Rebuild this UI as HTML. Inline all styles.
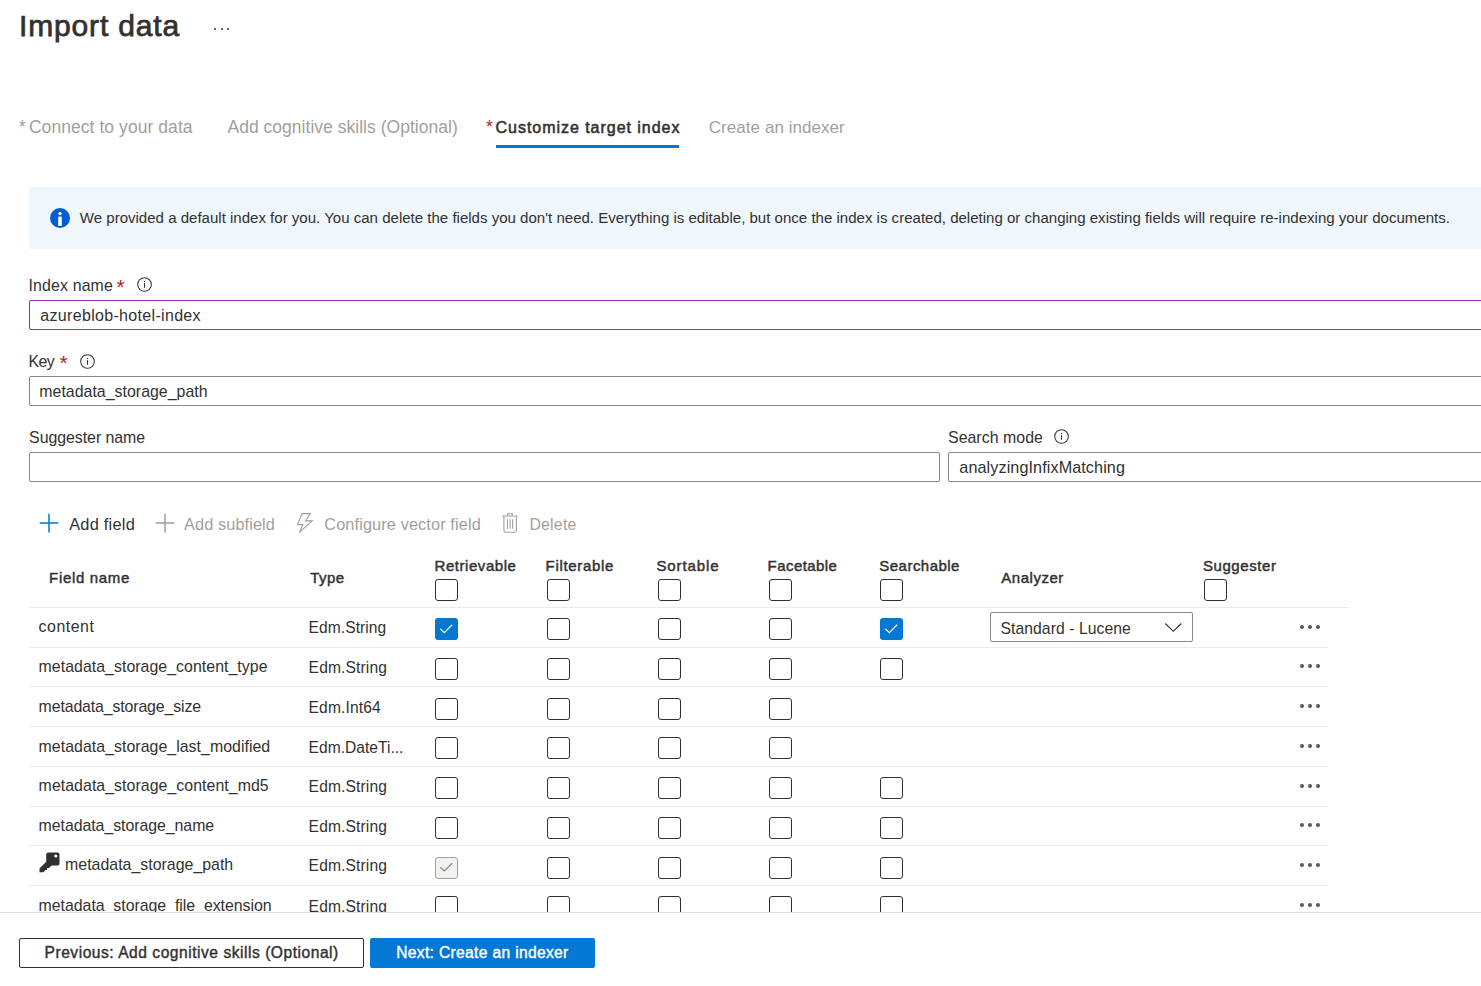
<!DOCTYPE html>
<html><head><meta charset="utf-8"><title>Import data</title>
<style>
html,body{margin:0;padding:0;background:#fff;}
body{width:1481px;height:986px;overflow:hidden;position:relative;font-family:"Liberation Sans",sans-serif;}
.t{position:absolute;white-space:nowrap;}
.b{position:absolute;}
</style></head><body>
<div class="t" style="left:19.02px;top:5.45px;font-size:30.0px;line-height:42px;color:#323130;-webkit-text-stroke:0.75px #323130;letter-spacing:0.848px;">Import data</div>
<div class="b" style="left:214.00px;top:27.50px;width:2.00px;height:2.00px;background:#323130;border-radius:50%"></div>
<div class="b" style="left:220.50px;top:27.50px;width:2.00px;height:2.00px;background:#323130;border-radius:50%"></div>
<div class="b" style="left:227.00px;top:27.50px;width:2.00px;height:2.00px;background:#323130;border-radius:50%"></div>
<div class="t" style="left:19.08px;top:114.94px;font-size:17.5px;line-height:24px;color:#a19f9d;">*</div>
<div class="t" style="left:28.90px;top:114.70px;font-size:17.5px;line-height:24px;color:#a19f9d;letter-spacing:0.063px;">Connect to your data</div>
<div class="t" style="left:227.46px;top:114.70px;font-size:17.5px;line-height:24px;color:#a19f9d;letter-spacing:0.024px;">Add cognitive skills (Optional)</div>
<div class="t" style="left:485.98px;top:114.94px;font-size:17.5px;line-height:24px;color:#a4262c;">*</div>
<div class="t" style="left:495.56px;top:116.78px;font-size:16.0px;line-height:22px;color:#323130;-webkit-text-stroke:0.55px #323130;letter-spacing:0.964px;">Customize target index</div>
<div class="b" style="left:496.00px;top:145.20px;width:183.00px;height:2.80px;background:#0078d4"></div>
<div class="t" style="left:708.78px;top:115.67px;font-size:17.0px;line-height:24px;color:#a19f9d;letter-spacing:0.055px;">Create an indexer</div>
<div class="b" style="left:29.00px;top:187.00px;width:1471.00px;height:61.80px;background:#eff6fc;border-radius:2px"></div>
<svg class="b" style="left:50px;top:208px" width="20" height="20" viewBox="0 0 20 20"><circle cx="10" cy="10" r="10" fill="#015cda"/><circle cx="10" cy="5.6" r="1.7" fill="#fff"/><rect x="8.2" y="8.6" width="3.6" height="9.4" fill="#fff"/></svg>
<div class="t" style="left:79.80px;top:206.97px;font-size:15.05px;line-height:21px;color:#323130;letter-spacing:-0.004px;">We provided a default index for you. You can delete the fields you don't need. Everything is editable, but once the index is created, deleting or changing existing fields will require re-indexing your documents.</div>
<div class="t" style="left:28.52px;top:275.37px;font-size:15.9px;line-height:22px;color:#323130;letter-spacing:0.142px;">Index name</div>
<div class="t" style="left:116.50px;top:272.22px;font-size:21px;line-height:29px;color:#a4262c;">*</div>
<svg class="b" style="left:137.00px;top:277.00px" width="15" height="15" viewBox="0 0 15 15"><circle cx="7.5" cy="7.5" r="6.8" fill="none" stroke="#323130" stroke-width="1.05"/><rect x="7" y="6.2" width="1" height="4.6" fill="#323130"/><circle cx="7.5" cy="4.5" r="0.65" fill="#323130"/></svg>
<div class="b" style="left:29.00px;top:300.00px;width:1491.00px;height:30.00px;border:1.1px solid #8a30a8;border-radius:2px;box-sizing:border-box;background:#fff"></div>
<div class="t" style="left:40.30px;top:305.12px;font-size:16.0px;line-height:22px;color:#323130;letter-spacing:0.320px;">azureblob-hotel-index</div>
<div class="t" style="left:28.44px;top:350.93px;font-size:15.9px;line-height:22px;color:#323130;letter-spacing:-0.560px;">Key</div>
<div class="t" style="left:59.50px;top:348.22px;font-size:21px;line-height:29px;color:#a4262c;">*</div>
<svg class="b" style="left:80.10px;top:353.50px" width="15" height="15" viewBox="0 0 15 15"><circle cx="7.5" cy="7.5" r="6.8" fill="none" stroke="#323130" stroke-width="1.05"/><rect x="7" y="6.2" width="1" height="4.6" fill="#323130"/><circle cx="7.5" cy="4.5" r="0.65" fill="#323130"/></svg>
<div class="b" style="left:29.00px;top:376.00px;width:1491.00px;height:30.20px;border:1.1px solid #8a8886;border-radius:2px;box-sizing:border-box;background:#fff"></div>
<div class="t" style="left:39.30px;top:381.05px;font-size:15.9px;line-height:22px;color:#323130;letter-spacing:0.020px;">metadata_storage_path</div>
<div class="t" style="left:29.08px;top:427.17px;font-size:15.9px;line-height:22px;color:#323130;letter-spacing:-0.043px;">Suggester name</div>
<div class="b" style="left:29.00px;top:452.40px;width:910.60px;height:29.70px;border:1.1px solid #8a8886;border-radius:2px;box-sizing:border-box;background:#fff"></div>
<div class="t" style="left:948.00px;top:427.17px;font-size:15.9px;line-height:22px;color:#323130;letter-spacing:0.032px;">Search mode</div>
<svg class="b" style="left:1054.00px;top:429.30px" width="15" height="15" viewBox="0 0 15 15"><circle cx="7.5" cy="7.5" r="6.8" fill="none" stroke="#323130" stroke-width="1.05"/><rect x="7" y="6.2" width="1" height="4.6" fill="#323130"/><circle cx="7.5" cy="4.5" r="0.65" fill="#323130"/></svg>
<div class="b" style="left:948.20px;top:452.40px;width:571.80px;height:29.70px;border:1.1px solid #8a8886;border-radius:2px;box-sizing:border-box;background:#fff"></div>
<div class="t" style="left:959.32px;top:455.55px;font-size:16.2px;line-height:23px;color:#323130;letter-spacing:0.088px;">analyzingInfixMatching</div>
<svg class="b" style="left:39px;top:513px" width="20" height="20" viewBox="0 0 20 20"><path d="M10 0.7 V19.5 M0.7 10 H19.3" stroke="#0078d4" stroke-width="1.5" fill="none"/></svg>
<div class="t" style="left:69.20px;top:512.58px;font-size:16.4px;line-height:23px;color:#323130;letter-spacing:0.230px;">Add field</div>
<svg class="b" style="left:154.5px;top:513px" width="20" height="20" viewBox="0 0 20 20"><path d="M10 0.7 V19.5 M0.7 10 H19.3" stroke="#a19f9d" stroke-width="1.5" fill="none"/></svg>
<div class="t" style="left:184.10px;top:512.61px;font-size:16.3px;line-height:23px;color:#a19f9d;letter-spacing:0.109px;">Add subfield</div>
<svg class="b" style="left:0;top:0" width="1481" height="986" viewBox="0 0 1481 986"><path d="M302.1,513.6 L310.2,513.6 L305.4,520.9 L312.2,520.9 L299.4,532.4 L302.9,524.6 L297.5,524.6 Z" fill="none" stroke="#a19f9d" stroke-width="1.1" stroke-linejoin="miter"/><path d="M502.1,516 H517.7 M507.6,516 V513.8 H512.3 V516 M503.9,516.2 V530.5 Q503.9,532.3 505.7,532.3 H514.5 Q516.3,532.3 516.3,530.5 V516.2 M507.4,519.2 V528.8 M510.1,519.2 V528.8 M512.6,519.2 V528.8" fill="none" stroke="#a19f9d" stroke-width="1.1"/></svg>
<div class="t" style="left:324.30px;top:512.61px;font-size:16.3px;line-height:23px;color:#a19f9d;letter-spacing:0.122px;">Configure vector field</div>
<div class="t" style="left:529.40px;top:514.09px;font-size:15.8px;line-height:22px;color:#a19f9d;letter-spacing:0.256px;">Delete</div>
<div class="t" style="left:49.08px;top:566.62px;font-size:15.0px;line-height:21px;color:#323130;-webkit-text-stroke:0.45px #323130;letter-spacing:0.676px;">Field name</div>
<div class="t" style="left:310.22px;top:566.62px;font-size:15.0px;line-height:21px;color:#323130;-webkit-text-stroke:0.45px #323130;letter-spacing:0.453px;">Type</div>
<div class="t" style="left:434.50px;top:554.78px;font-size:15.0px;line-height:21px;color:#323130;-webkit-text-stroke:0.45px #323130;letter-spacing:0.552px;">Retrievable</div>
<div class="b" style="left:435.00px;top:579.00px;width:22.60px;height:22.00px;border:1.5px solid #323130;border-radius:3px;box-sizing:border-box;background:#fff"></div>
<div class="t" style="left:545.62px;top:554.78px;font-size:15.0px;line-height:21px;color:#323130;-webkit-text-stroke:0.45px #323130;letter-spacing:0.667px;">Filterable</div>
<div class="b" style="left:547.00px;top:579.00px;width:22.60px;height:22.00px;border:1.5px solid #323130;border-radius:3px;box-sizing:border-box;background:#fff"></div>
<div class="t" style="left:656.46px;top:554.78px;font-size:15.0px;line-height:21px;color:#323130;-webkit-text-stroke:0.45px #323130;letter-spacing:0.903px;">Sortable</div>
<div class="b" style="left:658.00px;top:579.00px;width:22.60px;height:22.00px;border:1.5px solid #323130;border-radius:3px;box-sizing:border-box;background:#fff"></div>
<div class="t" style="left:767.62px;top:554.78px;font-size:15.0px;line-height:21px;color:#323130;-webkit-text-stroke:0.45px #323130;letter-spacing:0.430px;">Facetable</div>
<div class="b" style="left:769.00px;top:579.00px;width:22.60px;height:22.00px;border:1.5px solid #323130;border-radius:3px;box-sizing:border-box;background:#fff"></div>
<div class="t" style="left:879.34px;top:554.78px;font-size:15.0px;line-height:21px;color:#323130;-webkit-text-stroke:0.45px #323130;letter-spacing:0.471px;">Searchable</div>
<div class="b" style="left:880.00px;top:579.00px;width:22.60px;height:22.00px;border:1.5px solid #323130;border-radius:3px;box-sizing:border-box;background:#fff"></div>
<div class="t" style="left:1001.30px;top:566.62px;font-size:15.0px;line-height:21px;color:#323130;-webkit-text-stroke:0.45px #323130;letter-spacing:0.526px;">Analyzer</div>
<div class="t" style="left:1202.96px;top:554.78px;font-size:15.0px;line-height:21px;color:#323130;-webkit-text-stroke:0.45px #323130;letter-spacing:0.570px;">Suggester</div>
<div class="b" style="left:1204.00px;top:579.00px;width:22.60px;height:22.00px;border:1.5px solid #323130;border-radius:3px;box-sizing:border-box;background:#fff"></div>
<div class="b" style="left:29.00px;top:607.00px;width:1320.00px;height:1.00px;background:#edebe9"></div>
<div class="b" style="left:0;top:608px;width:1481px;height:304px;overflow:hidden">
<div class="t" style="left:38.60px;top:7.85px;font-size:15.9px;line-height:22px;color:#323130;letter-spacing:0.520px;">content</div>
<div class="t" style="left:308.52px;top:8.89px;font-size:15.6px;line-height:22px;color:#323130;letter-spacing:0.071px;">Edm.String</div>
<div class="b" style="left:435px;top:10.1px;width:22.6px;height:22px;background:#0078d4;border-radius:3px"><svg width="22.6" height="22" viewBox="0 0 22.6 22" style="position:absolute;left:0;top:0"><path d="M5.3 10.8 L9.3 14.6 L17.2 6.8" fill="none" stroke="#fff" stroke-width="1.2"/></svg></div>
<div class="b" style="left:547.00px;top:10.10px;width:22.60px;height:22.00px;border:1.5px solid #323130;border-radius:3px;box-sizing:border-box;background:#fff"></div>
<div class="b" style="left:658.00px;top:10.10px;width:22.60px;height:22.00px;border:1.5px solid #323130;border-radius:3px;box-sizing:border-box;background:#fff"></div>
<div class="b" style="left:769.00px;top:10.10px;width:22.60px;height:22.00px;border:1.5px solid #323130;border-radius:3px;box-sizing:border-box;background:#fff"></div>
<div class="b" style="left:880px;top:10.1px;width:22.6px;height:22px;background:#0078d4;border-radius:3px"><svg width="22.6" height="22" viewBox="0 0 22.6 22" style="position:absolute;left:0;top:0"><path d="M5.3 10.8 L9.3 14.6 L17.2 6.8" fill="none" stroke="#fff" stroke-width="1.2"/></svg></div>
<div class="b" style="left:29.00px;top:39.00px;width:1299.00px;height:1.00px;background:#edebe9"></div>
<div class="b" style="left:1300.00px;top:16.70px;width:4.00px;height:4.00px;background:#5a5856;border-radius:50%"></div>
<div class="b" style="left:1308.00px;top:16.70px;width:4.00px;height:4.00px;background:#5a5856;border-radius:50%"></div>
<div class="b" style="left:1316.00px;top:16.70px;width:4.00px;height:4.00px;background:#5a5856;border-radius:50%"></div>
<div class="b" style="left:990.00px;top:4.10px;width:203.00px;height:29.70px;border:1.1px solid #8a8886;border-radius:2px;box-sizing:border-box;background:#fff"></div>
<div class="t" style="left:1000.48px;top:9.94px;font-size:15.7px;line-height:22px;color:#323130;letter-spacing:0.080px;">Standard - Lucene</div>
<svg class="b" style="left:1164px;top:14.30px" width="19" height="11" viewBox="0 0 19 11"><path d="M1.3 1.5 L9.3 9.3 L17.3 1.5" fill="none" stroke="#323130" stroke-width="1.15"/></svg>
<div class="t" style="left:38.60px;top:47.75px;font-size:15.9px;line-height:22px;color:#323130;letter-spacing:0.034px;">metadata_storage_content_type</div>
<div class="t" style="left:308.60px;top:48.79px;font-size:15.6px;line-height:22px;color:#323130;letter-spacing:0.133px;">Edm.String</div>
<div class="b" style="left:435.00px;top:49.80px;width:22.60px;height:22.00px;border:1.5px solid #323130;border-radius:3px;box-sizing:border-box;background:#fff"></div>
<div class="b" style="left:547.00px;top:49.80px;width:22.60px;height:22.00px;border:1.5px solid #323130;border-radius:3px;box-sizing:border-box;background:#fff"></div>
<div class="b" style="left:658.00px;top:49.80px;width:22.60px;height:22.00px;border:1.5px solid #323130;border-radius:3px;box-sizing:border-box;background:#fff"></div>
<div class="b" style="left:769.00px;top:49.80px;width:22.60px;height:22.00px;border:1.5px solid #323130;border-radius:3px;box-sizing:border-box;background:#fff"></div>
<div class="b" style="left:880.00px;top:49.80px;width:22.60px;height:22.00px;border:1.5px solid #323130;border-radius:3px;box-sizing:border-box;background:#fff"></div>
<div class="b" style="left:29.00px;top:78.00px;width:1299.00px;height:1.00px;background:#edebe9"></div>
<div class="b" style="left:1300.00px;top:56.43px;width:4.00px;height:4.00px;background:#5a5856;border-radius:50%"></div>
<div class="b" style="left:1308.00px;top:56.43px;width:4.00px;height:4.00px;background:#5a5856;border-radius:50%"></div>
<div class="b" style="left:1316.00px;top:56.43px;width:4.00px;height:4.00px;background:#5a5856;border-radius:50%"></div>
<div class="t" style="left:38.60px;top:87.75px;font-size:15.9px;line-height:22px;color:#323130;letter-spacing:-0.136px;">metadata_storage_size</div>
<div class="t" style="left:308.60px;top:88.79px;font-size:15.6px;line-height:22px;color:#323130;letter-spacing:0.130px;">Edm.Int64</div>
<div class="b" style="left:435.00px;top:89.60px;width:22.60px;height:22.00px;border:1.5px solid #323130;border-radius:3px;box-sizing:border-box;background:#fff"></div>
<div class="b" style="left:547.00px;top:89.60px;width:22.60px;height:22.00px;border:1.5px solid #323130;border-radius:3px;box-sizing:border-box;background:#fff"></div>
<div class="b" style="left:658.00px;top:89.60px;width:22.60px;height:22.00px;border:1.5px solid #323130;border-radius:3px;box-sizing:border-box;background:#fff"></div>
<div class="b" style="left:769.00px;top:89.60px;width:22.60px;height:22.00px;border:1.5px solid #323130;border-radius:3px;box-sizing:border-box;background:#fff"></div>
<div class="b" style="left:29.00px;top:118.00px;width:1299.00px;height:1.00px;background:#edebe9"></div>
<div class="b" style="left:1300.00px;top:96.16px;width:4.00px;height:4.00px;background:#5a5856;border-radius:50%"></div>
<div class="b" style="left:1308.00px;top:96.16px;width:4.00px;height:4.00px;background:#5a5856;border-radius:50%"></div>
<div class="b" style="left:1316.00px;top:96.16px;width:4.00px;height:4.00px;background:#5a5856;border-radius:50%"></div>
<div class="t" style="left:38.60px;top:127.75px;font-size:15.9px;line-height:22px;color:#323130;letter-spacing:0.036px;">metadata_storage_last_modified</div>
<div class="t" style="left:308.60px;top:128.79px;font-size:15.6px;line-height:22px;color:#323130;letter-spacing:0.007px;">Edm.DateTi...</div>
<div class="b" style="left:435.00px;top:129.30px;width:22.60px;height:22.00px;border:1.5px solid #323130;border-radius:3px;box-sizing:border-box;background:#fff"></div>
<div class="b" style="left:547.00px;top:129.30px;width:22.60px;height:22.00px;border:1.5px solid #323130;border-radius:3px;box-sizing:border-box;background:#fff"></div>
<div class="b" style="left:658.00px;top:129.30px;width:22.60px;height:22.00px;border:1.5px solid #323130;border-radius:3px;box-sizing:border-box;background:#fff"></div>
<div class="b" style="left:769.00px;top:129.30px;width:22.60px;height:22.00px;border:1.5px solid #323130;border-radius:3px;box-sizing:border-box;background:#fff"></div>
<div class="b" style="left:29.00px;top:158.00px;width:1299.00px;height:1.00px;background:#edebe9"></div>
<div class="b" style="left:1300.00px;top:135.89px;width:4.00px;height:4.00px;background:#5a5856;border-radius:50%"></div>
<div class="b" style="left:1308.00px;top:135.89px;width:4.00px;height:4.00px;background:#5a5856;border-radius:50%"></div>
<div class="b" style="left:1316.00px;top:135.89px;width:4.00px;height:4.00px;background:#5a5856;border-radius:50%"></div>
<div class="t" style="left:38.60px;top:166.75px;font-size:15.9px;line-height:22px;color:#323130;letter-spacing:0.047px;">metadata_storage_content_md5</div>
<div class="t" style="left:308.60px;top:167.79px;font-size:15.6px;line-height:22px;color:#323130;letter-spacing:0.133px;">Edm.String</div>
<div class="b" style="left:435.00px;top:169.00px;width:22.60px;height:22.00px;border:1.5px solid #323130;border-radius:3px;box-sizing:border-box;background:#fff"></div>
<div class="b" style="left:547.00px;top:169.00px;width:22.60px;height:22.00px;border:1.5px solid #323130;border-radius:3px;box-sizing:border-box;background:#fff"></div>
<div class="b" style="left:658.00px;top:169.00px;width:22.60px;height:22.00px;border:1.5px solid #323130;border-radius:3px;box-sizing:border-box;background:#fff"></div>
<div class="b" style="left:769.00px;top:169.00px;width:22.60px;height:22.00px;border:1.5px solid #323130;border-radius:3px;box-sizing:border-box;background:#fff"></div>
<div class="b" style="left:880.00px;top:169.00px;width:22.60px;height:22.00px;border:1.5px solid #323130;border-radius:3px;box-sizing:border-box;background:#fff"></div>
<div class="b" style="left:29.00px;top:198.00px;width:1299.00px;height:1.00px;background:#edebe9"></div>
<div class="b" style="left:1300.00px;top:175.62px;width:4.00px;height:4.00px;background:#5a5856;border-radius:50%"></div>
<div class="b" style="left:1308.00px;top:175.62px;width:4.00px;height:4.00px;background:#5a5856;border-radius:50%"></div>
<div class="b" style="left:1316.00px;top:175.62px;width:4.00px;height:4.00px;background:#5a5856;border-radius:50%"></div>
<div class="t" style="left:38.60px;top:206.85px;font-size:15.9px;line-height:22px;color:#323130;letter-spacing:-0.056px;">metadata_storage_name</div>
<div class="t" style="left:308.60px;top:207.89px;font-size:15.6px;line-height:22px;color:#323130;letter-spacing:0.133px;">Edm.String</div>
<div class="b" style="left:435.00px;top:208.70px;width:22.60px;height:22.00px;border:1.5px solid #323130;border-radius:3px;box-sizing:border-box;background:#fff"></div>
<div class="b" style="left:547.00px;top:208.70px;width:22.60px;height:22.00px;border:1.5px solid #323130;border-radius:3px;box-sizing:border-box;background:#fff"></div>
<div class="b" style="left:658.00px;top:208.70px;width:22.60px;height:22.00px;border:1.5px solid #323130;border-radius:3px;box-sizing:border-box;background:#fff"></div>
<div class="b" style="left:769.00px;top:208.70px;width:22.60px;height:22.00px;border:1.5px solid #323130;border-radius:3px;box-sizing:border-box;background:#fff"></div>
<div class="b" style="left:880.00px;top:208.70px;width:22.60px;height:22.00px;border:1.5px solid #323130;border-radius:3px;box-sizing:border-box;background:#fff"></div>
<div class="b" style="left:29.00px;top:237.00px;width:1299.00px;height:1.00px;background:#edebe9"></div>
<div class="b" style="left:1300.00px;top:215.35px;width:4.00px;height:4.00px;background:#5a5856;border-radius:50%"></div>
<div class="b" style="left:1308.00px;top:215.35px;width:4.00px;height:4.00px;background:#5a5856;border-radius:50%"></div>
<div class="b" style="left:1316.00px;top:215.35px;width:4.00px;height:4.00px;background:#5a5856;border-radius:50%"></div>
<svg class="b" style="left:38.5px;top:244.18px" width="21" height="21" viewBox="0 0 21 21"><path d="M9.2 0.5 H18.5 Q20.5 0.5 20.5 2.5 V11.5 Q20.5 13.5 18.5 13.5 H12.5 L10 16 H8 V18 H6.5 L4.3 20.2 H0.5 V16.5 L7.2 9.8 V2.5 Q7.2 0.5 9.2 0.5 Z" fill="#323130"/><circle cx="16.8" cy="4" r="1.6" fill="#fff"/></svg>
<div class="t" style="left:65.10px;top:245.95px;font-size:15.9px;line-height:22px;color:#323130;letter-spacing:0.012px;">metadata_storage_path</div>
<div class="t" style="left:308.60px;top:246.99px;font-size:15.6px;line-height:22px;color:#323130;letter-spacing:0.133px;">Edm.String</div>
<div class="b" style="left:435px;top:248.5px;width:22.6px;height:22px;background:#f3f2f1;border:1.3px solid #a19f9d;border-radius:3px;box-sizing:border-box"><svg width="22.6" height="22" viewBox="0 0 22.6 22" style="position:absolute;left:-1.3px;top:-1.3px"><path d="M5.3 11.2 L9.3 15 L17.2 7.2" fill="none" stroke="#8a8886" stroke-width="1.2"/></svg></div>
<div class="b" style="left:547.00px;top:248.50px;width:22.60px;height:22.00px;border:1.5px solid #323130;border-radius:3px;box-sizing:border-box;background:#fff"></div>
<div class="b" style="left:658.00px;top:248.50px;width:22.60px;height:22.00px;border:1.5px solid #323130;border-radius:3px;box-sizing:border-box;background:#fff"></div>
<div class="b" style="left:769.00px;top:248.50px;width:22.60px;height:22.00px;border:1.5px solid #323130;border-radius:3px;box-sizing:border-box;background:#fff"></div>
<div class="b" style="left:880.00px;top:248.50px;width:22.60px;height:22.00px;border:1.5px solid #323130;border-radius:3px;box-sizing:border-box;background:#fff"></div>
<div class="b" style="left:29.00px;top:277.00px;width:1299.00px;height:1.00px;background:#edebe9"></div>
<div class="b" style="left:1300.00px;top:255.08px;width:4.00px;height:4.00px;background:#5a5856;border-radius:50%"></div>
<div class="b" style="left:1308.00px;top:255.08px;width:4.00px;height:4.00px;background:#5a5856;border-radius:50%"></div>
<div class="b" style="left:1316.00px;top:255.08px;width:4.00px;height:4.00px;background:#5a5856;border-radius:50%"></div>
<div class="t" style="left:38.60px;top:286.95px;font-size:15.9px;line-height:22px;color:#323130;letter-spacing:-0.035px;">metadata_storage_file_extension</div>
<div class="t" style="left:308.60px;top:287.99px;font-size:15.6px;line-height:22px;color:#323130;letter-spacing:0.133px;">Edm.String</div>
<div class="b" style="left:435.00px;top:288.20px;width:22.60px;height:22.00px;border:1.5px solid #323130;border-radius:3px;box-sizing:border-box;background:#fff"></div>
<div class="b" style="left:547.00px;top:288.20px;width:22.60px;height:22.00px;border:1.5px solid #323130;border-radius:3px;box-sizing:border-box;background:#fff"></div>
<div class="b" style="left:658.00px;top:288.20px;width:22.60px;height:22.00px;border:1.5px solid #323130;border-radius:3px;box-sizing:border-box;background:#fff"></div>
<div class="b" style="left:769.00px;top:288.20px;width:22.60px;height:22.00px;border:1.5px solid #323130;border-radius:3px;box-sizing:border-box;background:#fff"></div>
<div class="b" style="left:880.00px;top:288.20px;width:22.60px;height:22.00px;border:1.5px solid #323130;border-radius:3px;box-sizing:border-box;background:#fff"></div>
<div class="b" style="left:1300.00px;top:294.81px;width:4.00px;height:4.00px;background:#5a5856;border-radius:50%"></div>
<div class="b" style="left:1308.00px;top:294.81px;width:4.00px;height:4.00px;background:#5a5856;border-radius:50%"></div>
<div class="b" style="left:1316.00px;top:294.81px;width:4.00px;height:4.00px;background:#5a5856;border-radius:50%"></div>
</div>
<div class="b" style="left:0.00px;top:912.00px;width:1481.00px;height:1.00px;background:#e1dfdd"></div>
<div class="b" style="left:19.30px;top:938.20px;width:344.50px;height:29.80px;border:1.3px solid #323130;border-radius:2px;box-sizing:border-box;background:#fff"></div>
<div class="t" style="left:44.56px;top:942.11px;font-size:15.6px;line-height:22px;color:#323130;-webkit-text-stroke:0.4px #323130;letter-spacing:0.518px;">Previous: Add cognitive skills (Optional)</div>
<div class="b" style="left:370.20px;top:938.20px;width:224.80px;height:29.80px;background:#0078d4;border-radius:2px"></div>
<div class="t" style="left:396.20px;top:942.11px;font-size:15.6px;line-height:22px;color:#fff;-webkit-text-stroke:0.4px #fff;letter-spacing:0.338px;">Next: Create an indexer</div>
</body></html>
